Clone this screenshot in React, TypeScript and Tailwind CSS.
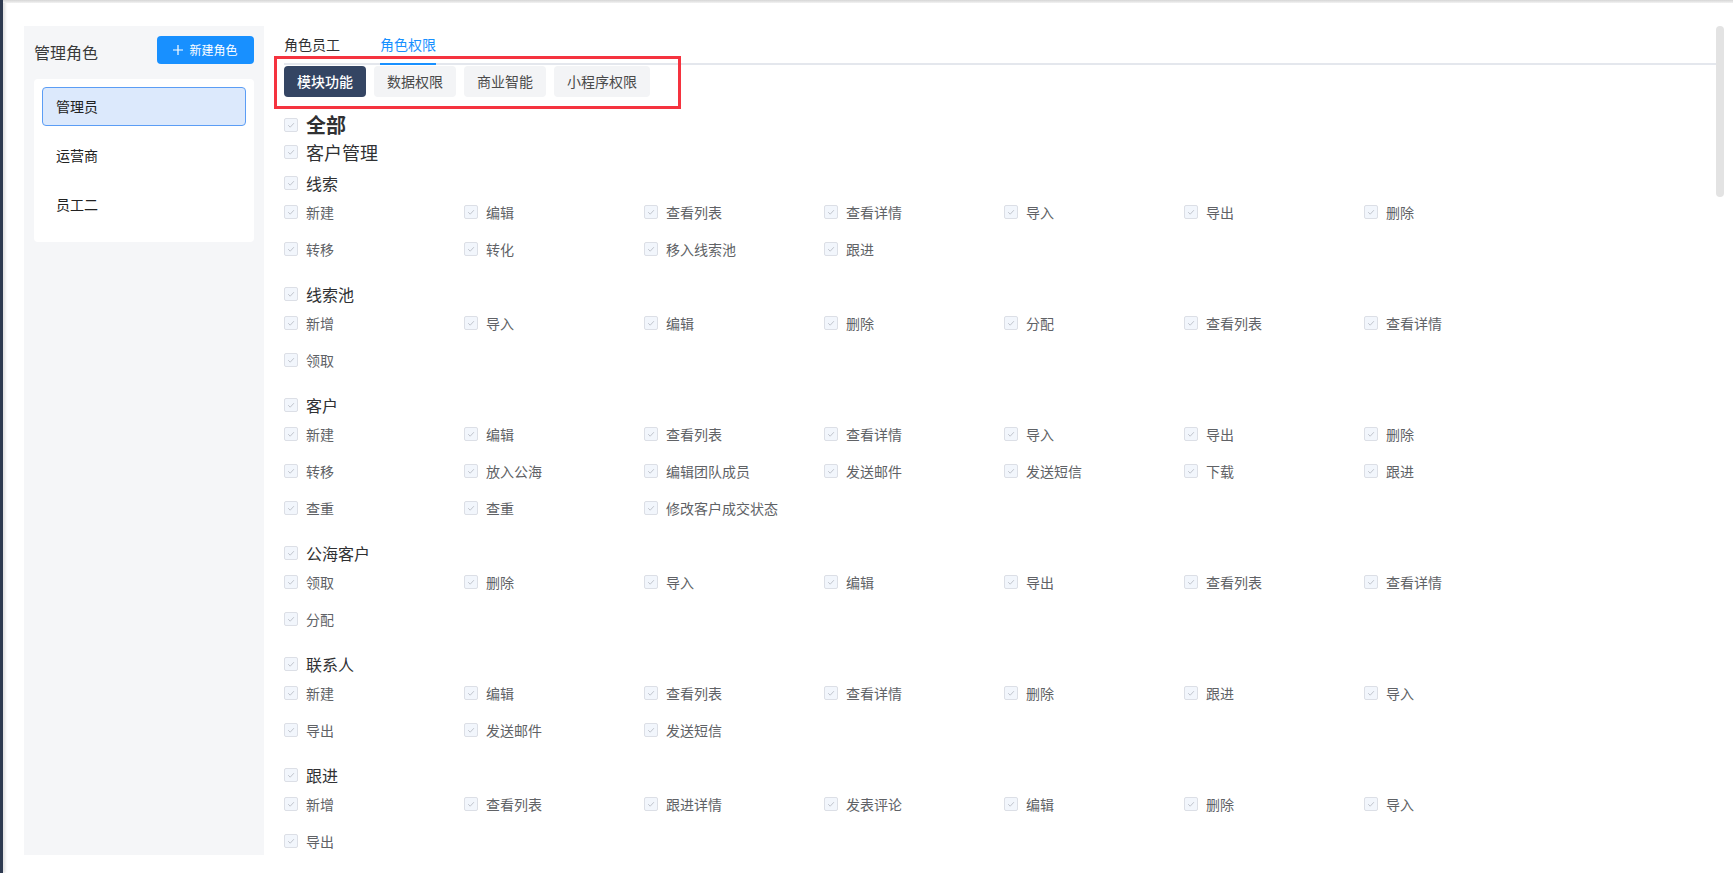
import React from "react";

const ROLES = ["管理员", "运营商", "员工二"];

const GROUPS: { title: string; items: string[] }[] = [
  {
    title: "线索",
    items: ["新建", "编辑", "查看列表", "查看详情", "导入", "导出", "删除", "转移", "转化", "移入线索池", "跟进"],
  },
  {
    title: "线索池",
    items: ["新增", "导入", "编辑", "删除", "分配", "查看列表", "查看详情", "领取"],
  },
  {
    title: "客户",
    items: [
      "新建", "编辑", "查看列表", "查看详情", "导入", "导出", "删除",
      "转移", "放入公海", "编辑团队成员", "发送邮件", "发送短信", "下载", "跟进",
      "查重", "查重", "修改客户成交状态",
    ],
  },
  {
    title: "公海客户",
    items: ["领取", "删除", "导入", "编辑", "导出", "查看列表", "查看详情", "分配"],
  },
  {
    title: "联系人",
    items: ["新建", "编辑", "查看列表", "查看详情", "删除", "跟进", "导入", "导出", "发送邮件", "发送短信"],
  },
  {
    title: "跟进",
    items: ["新增", "查看列表", "跟进详情", "发表评论", "编辑", "删除", "导入", "导出"],
  },
];

const SUB_TABS = ["模块功能", "数据权限", "商业智能", "小程序权限"];

function Check() {
  // disabled + checked checkbox
  return (
    <span className="flex h-[14px] w-[14px] shrink-0 items-center justify-center rounded-[2px] border border-[#dcdfe6] bg-[#f2f6fc]">
      <svg width="10" height="10" viewBox="0 0 10 10" fill="none">
        <polyline points="2.2,5.2 4.2,7.2 7.9,3.2" stroke="#c0c4cc" strokeWidth="1" />
      </svg>
    </span>
  );
}

export default function App() {
  return (
    <div className="flex h-[873px] w-full overflow-hidden bg-white font-['Noto_Sans_CJK_SC','Noto_Sans',sans-serif]">
      {/* left edge of the sidebar behind */}
      <div className="w-[3px] shrink-0 bg-[#2e3a50] shadow-[2px_0_3px_rgba(0,0,0,0.15)]" />

      <div className="flex min-w-0 flex-1 flex-col">
        <div className="h-[3px] shrink-0 bg-gradient-to-b from-[#d6d6d6] to-[#f2f2f2]" />

        <div className="flex flex-1 pl-[21px] pt-[23px]">
          {/* roles */}
          <div className="h-[829px] w-[240px] shrink-0 bg-[#f5f6f8] px-[10px]">
            <div className="flex h-[48px] items-center justify-between">
              <span className="pt-[3px] text-[16px] leading-[22px] text-[#3a3a3a]">管理角色</span>
              <button className="flex h-[28px] w-[97px] items-center justify-center gap-[6px] rounded-[4px] bg-[#1890ff] text-[12px] leading-none text-white">
                <svg width="10" height="10" viewBox="0 0 10 10">
                  <path d="M5 0v10M0 5h10" stroke="white" strokeWidth="1.2" />
                </svg>
                新建角色
              </button>
            </div>
            <div className="mt-[5px] rounded-[4px] bg-white p-[8px] pb-[8px]">
              {ROLES.map((r, i) => (
                <div
                  key={r}
                  className={
                    i === 0
                      ? "mb-[10px] flex h-[39px] items-center rounded-[4px] border border-[#5b9df5] bg-[#dce9fc] pl-[13px] text-[14px] text-[#222]"
                      : "mb-[10px] flex h-[39px] items-center rounded-[4px] border border-transparent pl-[13px] text-[14px] text-[#222]"
                  }
                >
                  {r}
                </div>
              ))}
            </div>
          </div>

          {/* permissions */}
          <div className="relative w-[1452px] shrink-0 pl-[20px]">
            <div className="flex h-[39px] gap-[40px] border-b-2 border-[#e4e7ed]">
              <div className="-mb-[2px] flex h-[39px] items-center border-b-2 border-transparent text-[14px] text-[#303133]">
                角色员工
              </div>
              <div className="-mb-[2px] flex h-[39px] items-center border-b-2 border-[#1890ff] text-[14px] text-[#1890ff]">
                角色权限
              </div>
            </div>

            <div className="mt-[1px] flex gap-[8px]">
              {SUB_TABS.map((t, i) => (
                <div
                  key={t}
                  className={
                    i === 0
                      ? "flex h-[31px] items-center rounded-[4px] bg-[#344563] px-[13px] text-[14px] font-medium text-white"
                      : "flex h-[31px] items-center rounded-[4px] bg-[#f3f4f6] px-[13px] text-[14px] text-[#4a4a4a]"
                  }
                >
                  {t}
                </div>
              ))}
            </div>

            {/* highlight box drawn over the sub tabs */}
            <div className="pointer-events-none absolute left-[10px] top-[30px] h-[53px] w-[407px] border-[3px] border-[#f5333f]" />

            <div className="mt-[14px] flex h-[28px] items-center gap-[8px]">
              <Check />
              <span className="text-[20px] font-bold leading-none text-[#303133]">全部</span>
            </div>
            <div className="flex h-[26px] items-center gap-[8px]">
              <Check />
              <span className="text-[18px] leading-none text-[#303133]">客户管理</span>
            </div>

            <div className="mt-[7px]">
              {GROUPS.map((g, gi) => (
                <div key={gi} className="mb-[16px]">
                  <div className="flex h-[21px] items-center gap-[8px]">
                    <Check />
                    <span className="text-[16px] leading-none text-[#303133]">{g.title}</span>
                  </div>
                  <div className="grid grid-cols-[repeat(7,180px)]">
                    {g.items.map((it, ii) => (
                      <div key={ii} className="flex h-[37px] items-center gap-[8px]">
                        <Check />
                        <span className="text-[14px] leading-none text-[#606266]">{it}</span>
                      </div>
                    ))}
                  </div>
                </div>
              ))}
            </div>
          </div>

          {/* scrollbar */}
          <div className="w-[8px] shrink-0">
            <div className="h-[171px] w-[8px] rounded-full bg-[#e3e3e3]" />
          </div>
        </div>
      </div>
    </div>
  );
}
